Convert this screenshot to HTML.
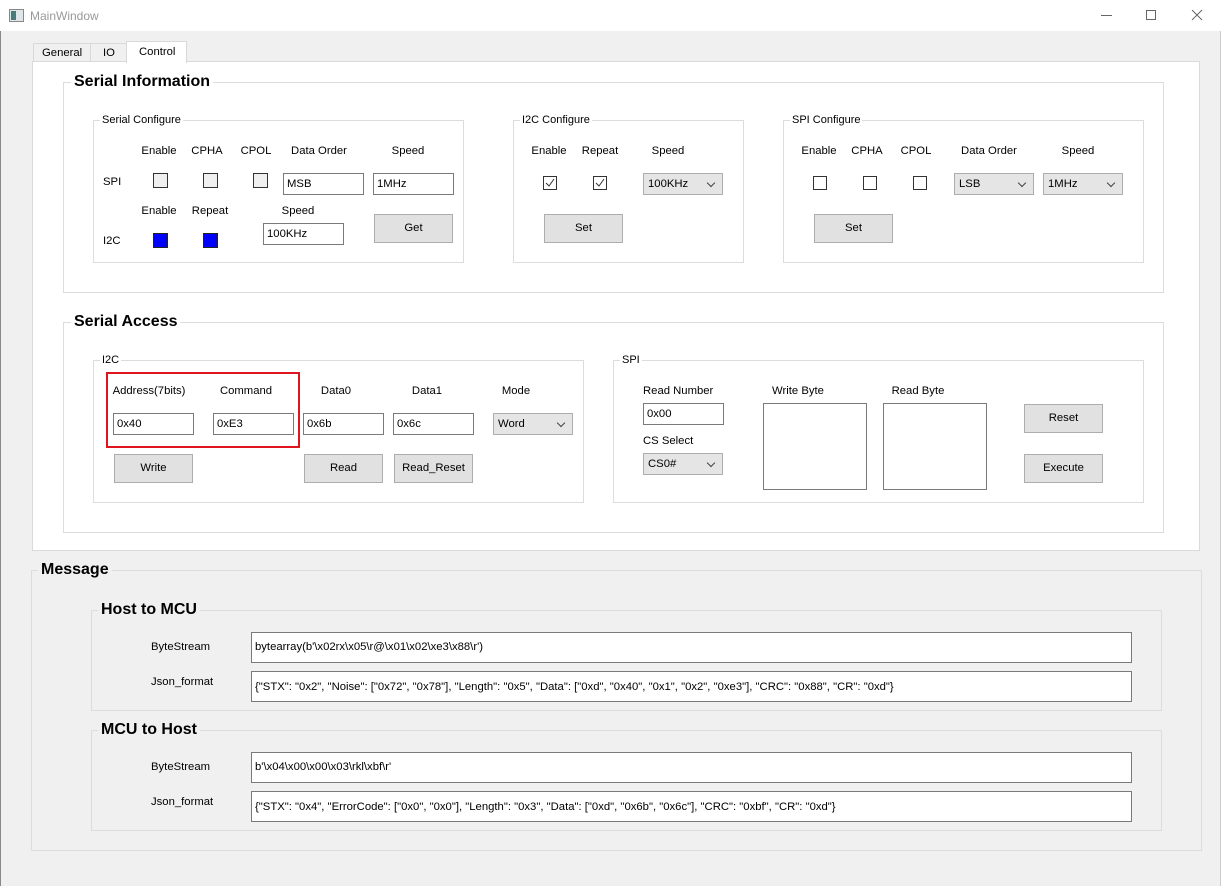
<!DOCTYPE html>
<html><head><meta charset="utf-8"><style>
*{box-sizing:border-box;margin:0;padding:0}
body{width:1221px;height:886px;background:#f0f0f0;font-family:"Liberation Sans",Arial,sans-serif;font-size:11.3px;color:#000;position:relative;overflow:hidden}
.a{position:absolute}
.l{position:absolute;width:120px;text-align:center;line-height:14px;white-space:nowrap}
.t{position:absolute;line-height:14px;white-space:nowrap}
.g{position:absolute;border:1px solid #dcdcdc}
.gt{position:absolute;background:inherit;padding:0 2px;line-height:14px;white-space:nowrap}
.h{position:absolute;font-weight:bold;font-size:16px;line-height:18px;padding:0 3px;white-space:nowrap}
.in{position:absolute;background:#fff;border:1px solid #7a7a7a;height:22px;line-height:20px;padding-left:3px;white-space:nowrap;overflow:hidden}
.bt{position:absolute;background:#e1e1e1;border:1px solid #adadad;height:29px;line-height:27px;text-align:center}
.cb{position:absolute;width:15px;height:15px;border:1px solid #333;background:#f0f0f0}
.cw{position:absolute;width:14px;height:14px;border:1px solid #333;background:#fff}
.bl{position:absolute;width:15px;height:15px;border:1px solid #222;background:#0000ff}
.co{position:absolute;background:#e5e5e5;border:1px solid #adadad;height:22px;line-height:20px;padding-left:4px}
.co:after{content:"";position:absolute;right:8px;top:6px;width:5px;height:5px;border-right:1px solid #444;border-bottom:1px solid #444;transform:rotate(45deg)}
.ta{position:absolute;background:#fff;border:1px solid #7a7a7a}
</style></head><body>
<div class="a" style="left:0;top:0;width:1221px;height:31px;background:#fff"></div>
<div class="a" style="left:9px;top:9px;width:15px;height:13px;border:1px solid #888;background:#dfe6ea"></div>
<div class="a" style="left:11px;top:11px;width:5px;height:9px;background:#4a7a7a"></div>
<div class="t" style="left:30px;top:9px;color:#999;font-size:12px">MainWindow</div>
<div class="a" style="left:1101px;top:15px;width:11px;height:1px;background:#666"></div>
<div class="a" style="left:1146px;top:10px;width:10px;height:10px;border:1px solid #666"></div>
<svg class="a" style="left:1191px;top:9px" width="12" height="12"><path d="M1 1L11 11M11 1L1 11" stroke="#666" stroke-width="1"/></svg>
<div class="a" style="left:0;top:31px;width:1px;height:855px;background:#888"></div>
<div class="a" style="left:1220px;top:31px;width:1px;height:855px;background:#ccc"></div>

<div class="a" style="left:33px;top:43px;width:58px;height:19px;border:1px solid #d9d9d9;background:#f0f0f0"></div>
<div class="t" style="left:42px;top:46px">General</div>
<div class="a" style="left:91px;top:43px;width:36px;height:19px;border:1px solid #d9d9d9;border-left:none;background:#f0f0f0"></div>
<div class="t" style="left:103px;top:46px">IO</div>
<div class="a" style="left:32px;top:61px;width:1168px;height:490px;border:1px solid #d9d9d9;background:#fff"></div>
<div class="a" style="left:126px;top:41px;width:61px;height:22px;border:1px solid #d9d9d9;border-bottom:none;background:#fff"></div>
<div class="t" style="left:139px;top:45px">Control</div>

<div class="g" style="left:63px;top:82px;width:1101px;height:211px"></div>
<div class="h" style="left:71px;top:73px;background:#fff">Serial Information</div>

<div class="g" style="left:93px;top:120px;width:371px;height:143px"></div>
<div class="gt" style="left:100px;top:113px;background:#fff;font-size:11px">Serial Configure</div>
<div class="l" style="left:99px;top:144px">Enable</div>
<div class="l" style="left:147px;top:144px">CPHA</div>
<div class="l" style="left:196px;top:144px">CPOL</div>
<div class="l" style="left:259px;top:144px">Data Order</div>
<div class="l" style="left:348px;top:144px">Speed</div>
<div class="t" style="left:103px;top:175px">SPI</div>
<div class="cb" style="left:153px;top:173px"></div>
<div class="cb" style="left:203px;top:173px"></div>
<div class="cb" style="left:253px;top:173px"></div>
<div class="in" style="left:283px;top:173px;width:81px">MSB</div>
<div class="in" style="left:373px;top:173px;width:81px">1MHz</div>
<div class="l" style="left:99px;top:204px">Enable</div>
<div class="l" style="left:150px;top:204px">Repeat</div>
<div class="l" style="left:238px;top:204px">Speed</div>
<div class="t" style="left:103px;top:234px">I2C</div>
<div class="bl" style="left:153px;top:233px"></div>
<div class="bl" style="left:203px;top:233px"></div>
<div class="in" style="left:263px;top:223px;width:81px">100KHz</div>
<div class="bt" style="left:374px;top:214px;width:79px">Get</div>

<div class="g" style="left:513px;top:120px;width:231px;height:143px"></div>
<div class="gt" style="left:520px;top:113px;background:#fff;font-size:11px">I2C Configure</div>
<div class="l" style="left:489px;top:144px">Enable</div>
<div class="l" style="left:540px;top:144px">Repeat</div>
<div class="l" style="left:608px;top:144px">Speed</div>
<svg class="a" style="left:543px;top:176px" width="14" height="14"><rect x=".5" y=".5" width="13" height="13" fill="#fff" stroke="#333"/><path d="M3 7L6 10L11 3" fill="none" stroke="#333"/></svg>
<svg class="a" style="left:593px;top:176px" width="14" height="14"><rect x=".5" y=".5" width="13" height="13" fill="#fff" stroke="#333"/><path d="M3 7L6 10L11 3" fill="none" stroke="#333"/></svg>
<div class="co" style="left:643px;top:173px;width:80px">100KHz</div>
<div class="bt" style="left:544px;top:214px;width:79px">Set</div>

<div class="g" style="left:783px;top:120px;width:361px;height:143px"></div>
<div class="gt" style="left:790px;top:113px;background:#fff;font-size:11px">SPI Configure</div>
<div class="l" style="left:759px;top:144px">Enable</div>
<div class="l" style="left:807px;top:144px">CPHA</div>
<div class="l" style="left:856px;top:144px">CPOL</div>
<div class="l" style="left:929px;top:144px">Data Order</div>
<div class="l" style="left:1018px;top:144px">Speed</div>
<div class="cw" style="left:813px;top:176px"></div>
<div class="cw" style="left:863px;top:176px"></div>
<div class="cw" style="left:913px;top:176px"></div>
<div class="co" style="left:954px;top:173px;width:80px">LSB</div>
<div class="co" style="left:1043px;top:173px;width:80px">1MHz</div>
<div class="bt" style="left:814px;top:214px;width:79px">Set</div>

<div class="g" style="left:63px;top:322px;width:1101px;height:211px"></div>
<div class="h" style="left:71px;top:313px;background:#fff">Serial Access</div>

<div class="g" style="left:93px;top:360px;width:491px;height:143px"></div>
<div class="gt" style="left:100px;top:353px;background:#fff;font-size:11px">I2C</div>
<div class="a" style="left:106px;top:372px;width:194px;height:76px;border:2px solid #e0141e"></div>
<div class="l" style="left:89px;top:384px">Address(7bits)</div>
<div class="l" style="left:186px;top:384px">Command</div>
<div class="l" style="left:276px;top:384px">Data0</div>
<div class="l" style="left:367px;top:384px">Data1</div>
<div class="l" style="left:456px;top:384px">Mode</div>
<div class="in" style="left:113px;top:413px;width:81px">0x40</div>
<div class="in" style="left:213px;top:413px;width:81px">0xE3</div>
<div class="in" style="left:303px;top:413px;width:81px">0x6b</div>
<div class="in" style="left:393px;top:413px;width:81px">0x6c</div>
<div class="co" style="left:493px;top:413px;width:80px">Word</div>
<div class="bt" style="left:114px;top:454px;width:79px">Write</div>
<div class="bt" style="left:304px;top:454px;width:79px">Read</div>
<div class="bt" style="left:394px;top:454px;width:79px">Read_Reset</div>

<div class="g" style="left:613px;top:360px;width:531px;height:143px"></div>
<div class="gt" style="left:620px;top:353px;background:#fff;font-size:11px">SPI</div>
<div class="t" style="left:643px;top:384px">Read Number</div>
<div class="in" style="left:643px;top:403px;width:81px">0x00</div>
<div class="t" style="left:643px;top:434px">CS Select</div>
<div class="co" style="left:643px;top:453px;width:80px">CS0#</div>
<div class="l" style="left:738px;top:384px">Write Byte</div>
<div class="ta" style="left:763px;top:403px;width:104px;height:87px"></div>
<div class="l" style="left:858px;top:384px">Read Byte</div>
<div class="ta" style="left:883px;top:403px;width:104px;height:87px"></div>
<div class="bt" style="left:1024px;top:404px;width:79px">Reset</div>
<div class="bt" style="left:1024px;top:454px;width:79px">Execute</div>

<div class="g" style="left:31px;top:570px;width:1171px;height:281px"></div>
<div class="h" style="left:38px;top:561px;background:#f0f0f0">Message</div>

<div class="g" style="left:91px;top:610px;width:1071px;height:101px"></div>
<div class="h" style="left:98px;top:601px;background:#f0f0f0">Host to MCU</div>
<div class="t" style="left:151px;top:640px">ByteStream</div>
<div class="in" style="left:251px;top:632px;width:881px;height:31px;line-height:29px">bytearray(b'\x02rx\x05\r@\x01\x02\xe3\x88\r')</div>
<div class="t" style="left:151px;top:675px">Json_format</div>
<div class="in" style="left:251px;top:671px;width:881px;height:31px;line-height:31px">{"STX": "0x2", "Noise": ["0x72", "0x78"], "Length": "0x5", "Data": ["0xd", "0x40", "0x1", "0x2", "0xe3"], "CRC": "0x88", "CR": "0xd"}</div>

<div class="g" style="left:91px;top:730px;width:1071px;height:101px"></div>
<div class="h" style="left:98px;top:721px;background:#f0f0f0">MCU to Host</div>
<div class="t" style="left:151px;top:760px">ByteStream</div>
<div class="in" style="left:251px;top:752px;width:881px;height:31px;line-height:29px">b'\x04\x00\x00\x03\rkl\xbf\r'</div>
<div class="t" style="left:151px;top:795px">Json_format</div>
<div class="in" style="left:251px;top:791px;width:881px;height:31px;line-height:31px">{"STX": "0x4", "ErrorCode": ["0x0", "0x0"], "Length": "0x3", "Data": ["0xd", "0x6b", "0x6c"], "CRC": "0xbf", "CR": "0xd"}</div>
</body></html>
